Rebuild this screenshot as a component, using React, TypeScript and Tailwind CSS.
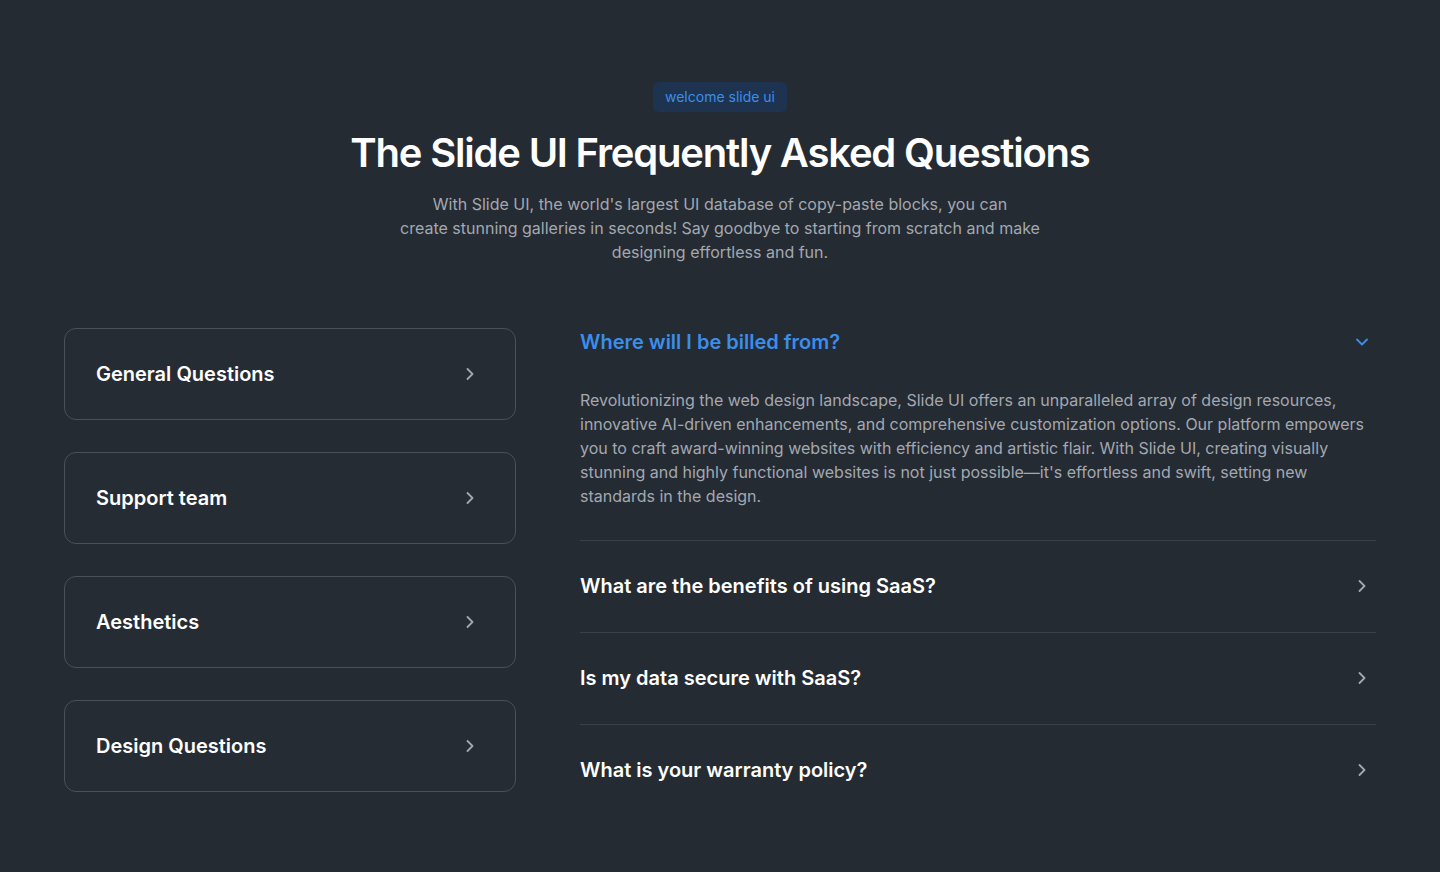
import { ChevronRight, ChevronDown } from "lucide-react";

const categories = ["General Questions", "Support team", "Aesthetics", "Design Questions"];

const faqs = [
  {
    q: "Where will I be billed from?",
    a: "Revolutionizing the web design landscape, Slide UI offers an unparalleled array of design resources, innovative AI-driven enhancements, and comprehensive customization options. Our platform empowers you to craft award-winning websites with efficiency and artistic flair. With Slide UI, creating visually stunning and highly functional websites is not just possible—it's effortless and swift, setting new standards in the design.",
    open: true,
  },
  { q: "What are the benefits of using SaaS?", a: "", open: false },
  { q: "Is my data secure with SaaS?", a: "", open: false },
  { q: "What is your warranty policy?", a: "", open: false },
];

export default function App() {
  return (
    <div
      className="min-h-[872px] bg-[#252b33] px-16 pt-[82px] pb-20"
      style={{ fontFamily: "Inter, 'Noto Sans', sans-serif" }}
    >
      <div className="flex flex-col items-center text-center">
        <span className="rounded-md bg-[#1d3350] px-3 py-[5px] text-sm text-[#3b8eea]">
          welcome slide ui
        </span>
        <h1 className="mt-[15px] text-[40px] font-semibold leading-[52px] tracking-[-0.03em] text-white">
          The Slide UI Frequently Asked Questions
        </h1>
        <p className="mt-[13px] max-w-[660px] text-base leading-6 text-[#a3a8b0]">
          With Slide UI, the world's largest UI database of copy-paste blocks, you can
          <br />
          create stunning galleries in seconds! Say goodbye to starting from scratch and make
          <br />
          designing effortless and fun.
        </p>
      </div>

      <div className="mt-16 flex gap-16">
        <div className="flex w-[452px] shrink-0 flex-col gap-8">
          {categories.map((c) => (
            <button
              key={c}
              className="flex h-[92px] items-center justify-between rounded-xl border border-[#4a515b] bg-[#262c34] pl-[31px] pr-[35px] text-left"
            >
              <span className="text-xl font-semibold text-white">{c}</span>
              <ChevronRight className="h-5 w-5 text-[#a3a8b0]" strokeWidth={2.2} />
            </button>
          ))}
        </div>

        <div className="flex flex-1 flex-col">
          {faqs.map((f, i) => (
            <div
              key={f.q}
              className={`${i === 0 ? "pb-8" : "pt-[31px] pb-8"} ${
                i < faqs.length - 1 ? "border-b border-[#3a414b]" : ""
              }`}
            >
              <div className="flex items-center justify-between">
                <span
                  className={`text-xl font-semibold leading-7 ${
                    f.open ? "text-[#3b8eea]" : "text-white"
                  }`}
                >
                  {f.q}
                </span>
                {f.open ? (
                  <ChevronDown className="mr-1 h-5 w-5 text-[#3b8eea]" strokeWidth={2.2} />
                ) : (
                  <ChevronRight className="mr-1 h-5 w-5 text-[#a3a8b0]" strokeWidth={2.2} />
                )}
              </div>
              {f.open && (
                <p className="mt-8 pr-2 text-base leading-6 text-[#a3a8b0]">{f.a}</p>
              )}
            </div>
          ))}
        </div>
      </div>
    </div>
  );
}
